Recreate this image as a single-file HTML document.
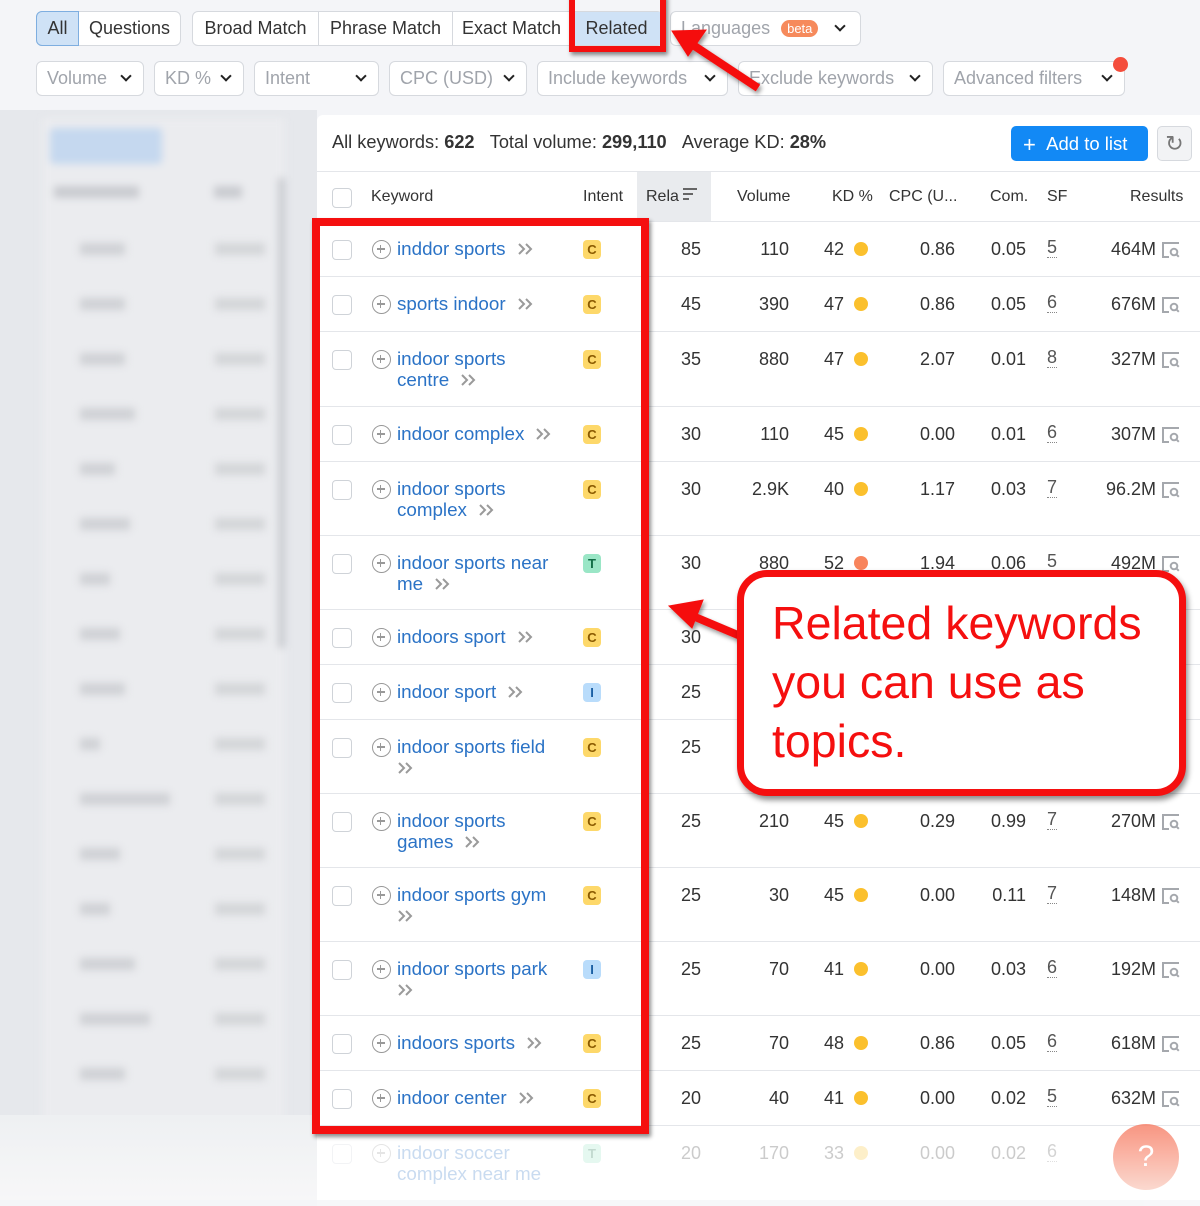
<!DOCTYPE html>
<html><head><meta charset="utf-8"><style>
*{box-sizing:border-box;margin:0;padding:0}
body{width:1200px;height:1200px;overflow:hidden;background:#f4f5f8;font-family:"Liberation Sans",sans-serif;color:#333;font-size:18px;position:relative}
.a{position:absolute;white-space:nowrap}
.btn{position:absolute;top:11px;height:35px;border:1px solid #d6d9de;background:#fff;line-height:33px;font-size:18px;color:#333;display:flex}
.btn span{display:inline-block;text-align:center;border-right:1px solid #d6d9de;height:33px}
.btn span:last-child{border-right:none}
.f{position:absolute;top:61px;height:35px;border:1px solid #d6d9de;border-radius:6px;background:#fff;line-height:33px;color:#a0a4ab;padding-left:10px;font-size:18px}
.chev{display:inline-block;width:8px;height:8px;border-right:2.2px solid #222;border-bottom:2.2px solid #222;transform:rotate(45deg);position:absolute;right:13px;top:10px}
.r{position:absolute;left:317px;width:883px;border-bottom:1px solid #e4e6ea;background:#fff}
.r>*{position:absolute;top:16px;line-height:22px;white-space:nowrap}
.cb{left:15px;top:18px!important;width:20px;height:20px;border:1.5px solid #cfd3d8;border-radius:4px;background:#fff}
.pl{left:55px;top:18px!important;width:19px;height:19px;border:1.8px solid #999;border-radius:50%}
.pl:before{content:"";position:absolute;left:3.5px;top:6.8px;width:8px;height:1.8px;background:#999}
.pl:after{content:"";position:absolute;left:6.6px;top:3.7px;width:1.8px;height:8px;background:#999}
.kw{left:80px;color:#2b73c6;font-size:18.8px;line-height:21px!important}
.kw svg{margin-left:11px;vertical-align:-1px}
.in{left:266px;top:18px!important;width:18px;height:19px;border-radius:4px;font-size:13px;font-weight:bold;text-align:center;line-height:19px!important}
.C{background:#fdd86a;color:#8a5a00}.T{background:#9ae6c6;color:#106c45}.I{background:#b9dcfb;color:#1b5fa3}
.n{text-align:right;font-size:18px}
.rl{right:499px}.vo{right:411px}.kd{right:356px}.dot{left:537px;top:20px!important;width:14px;height:14px;border-radius:50%;background:#fbc02d}
.cpc{right:245px}.com{right:174px}.sf{left:730px;border-bottom:1.5px dotted #888;line-height:19px!important;color:#555;font-size:18px}.res{right:44px}
.ic{left:844px;top:19px!important;width:20px;height:18px}
.blur{filter:blur(4px)}
</style></head><body>
<svg width="0" height="0" style="position:absolute"><defs>
<symbol id="ch" viewBox="0 0 18 14"><path d="M2 2l5 5-5 5M9 2l5 5-5 5" fill="none" stroke="#9a9a9a" stroke-width="2"/></symbol>
<symbol id="mg" viewBox="0 0 20 18"><path d="M18 2H2v14h6" fill="none" stroke="#a5a8ad" stroke-width="2"/><circle cx="13" cy="11" r="3.3" fill="none" stroke="#a5a8ad" stroke-width="2"/><path d="M15.3 13.3l2.5 2.5" stroke="#a5a8ad" stroke-width="2"/></symbol>
</defs></svg>
<!-- top buttons -->
<div class="btn" style="left:36px;border-radius:6px"><span style="width:43px;background:#cfe2f6;border:1px solid #7eaee0;margin:-1px 0 0 -1px;height:35px;border-radius:6px 0 0 6px">All</span><span style="width:101px">Questions</span></div>
<div class="btn" style="left:192px;border-radius:6px"><span style="width:126px">Broad Match</span><span style="width:134px">Phrase Match</span><span style="width:118px">Exact Match</span><span style="width:91px;background:#cfe2f6">Related</span></div>
<div class="btn" style="left:670px;width:191px;border-radius:6px;color:#a0a4ab;padding-left:10px;display:block">Languages <span style="display:inline-block;background:#f68a5c;color:#fff;font-size:13px;line-height:17px;height:17px;border-radius:9px;padding:0 6px;border:none;margin-left:6px;vertical-align:1px">beta</span><div class="chev" style="right:16px"></div></div>
<div class="f" style="left:36px;width:108px">Volume<div class="chev"></div></div>
<div class="f" style="left:154px;width:90px">KD %<div class="chev"></div></div>
<div class="f" style="left:254px;width:125px">Intent<div class="chev"></div></div>
<div class="f" style="left:389px;width:138px">CPC (USD)<div class="chev"></div></div>
<div class="f" style="left:537px;width:191px">Include keywords<div class="chev"></div></div>
<div class="f" style="left:738px;width:195px">Exclude keywords<div class="chev"></div></div>
<div class="f" style="left:943px;width:182px">Advanced filters<div class="chev"></div></div>
<div class="a" style="left:1113px;top:57px;width:15px;height:15px;border-radius:50%;background:#f44d3c"></div>
<!-- left sidebar blurred -->
<div class="a" style="left:0;top:110px;width:317px;height:1090px;background:#e6e8ec"></div>
<div class="a blur" style="left:42px;top:118px;width:243px;height:1010px;background:#ebecef">
 <div class="a" style="left:8px;top:10px;width:112px;height:36px;background:#c5d8ef;border-radius:4px"></div>
 <div class="a" style="left:12px;top:68px;width:85px;height:12px;background:#c9cbd0"></div>
 <div class="a" style="left:172px;top:68px;width:28px;height:12px;background:#c9cbd0"></div>
 <div class="a" style="left:236px;top:60px;width:7px;height:470px;background:#c9cbd0"></div>
</div>
<div class="a blur" style="left:55px;top:240px;width:220px;height:850px">
 <div class="a" style="left:25px;top:3px;width:45px;height:12px;background:#cfd1d5"></div><div class="a" style="left:160px;top:3px;width:50px;height:12px;background:#d3d5d8"></div>
 <div class="a" style="left:25px;top:58px;width:45px;height:12px;background:#cfd1d5"></div><div class="a" style="left:160px;top:58px;width:50px;height:12px;background:#d3d5d8"></div>
 <div class="a" style="left:25px;top:113px;width:45px;height:12px;background:#cfd1d5"></div><div class="a" style="left:160px;top:113px;width:50px;height:12px;background:#d3d5d8"></div>
 <div class="a" style="left:25px;top:168px;width:55px;height:12px;background:#cfd1d5"></div><div class="a" style="left:160px;top:168px;width:50px;height:12px;background:#d3d5d8"></div>
 <div class="a" style="left:25px;top:223px;width:35px;height:12px;background:#cfd1d5"></div><div class="a" style="left:160px;top:223px;width:50px;height:12px;background:#d3d5d8"></div>
 <div class="a" style="left:25px;top:278px;width:50px;height:12px;background:#cfd1d5"></div><div class="a" style="left:160px;top:278px;width:50px;height:12px;background:#d3d5d8"></div>
 <div class="a" style="left:25px;top:333px;width:30px;height:12px;background:#cfd1d5"></div><div class="a" style="left:160px;top:333px;width:50px;height:12px;background:#d3d5d8"></div>
 <div class="a" style="left:25px;top:388px;width:40px;height:12px;background:#cfd1d5"></div><div class="a" style="left:160px;top:388px;width:50px;height:12px;background:#d3d5d8"></div>
 <div class="a" style="left:25px;top:443px;width:45px;height:12px;background:#cfd1d5"></div><div class="a" style="left:160px;top:443px;width:50px;height:12px;background:#d3d5d8"></div>
 <div class="a" style="left:25px;top:498px;width:20px;height:12px;background:#cfd1d5"></div><div class="a" style="left:160px;top:498px;width:50px;height:12px;background:#d3d5d8"></div>
 <div class="a" style="left:25px;top:553px;width:90px;height:12px;background:#cfd1d5"></div><div class="a" style="left:160px;top:553px;width:50px;height:12px;background:#d3d5d8"></div>
 <div class="a" style="left:25px;top:608px;width:40px;height:12px;background:#cfd1d5"></div><div class="a" style="left:160px;top:608px;width:50px;height:12px;background:#d3d5d8"></div>
 <div class="a" style="left:25px;top:663px;width:30px;height:12px;background:#cfd1d5"></div><div class="a" style="left:160px;top:663px;width:50px;height:12px;background:#d3d5d8"></div>
 <div class="a" style="left:25px;top:718px;width:55px;height:12px;background:#cfd1d5"></div><div class="a" style="left:160px;top:718px;width:50px;height:12px;background:#d3d5d8"></div>
 <div class="a" style="left:25px;top:773px;width:70px;height:12px;background:#cfd1d5"></div><div class="a" style="left:160px;top:773px;width:50px;height:12px;background:#d3d5d8"></div>
 <div class="a" style="left:25px;top:828px;width:45px;height:12px;background:#cfd1d5"></div><div class="a" style="left:160px;top:828px;width:50px;height:12px;background:#d3d5d8"></div>
</div>
<div class="a" style="left:0;top:1115px;width:317px;height:85px;background:linear-gradient(#eef0f2,#f7f7f8)"></div>
<!-- main panel -->
<div class="a" style="left:317px;top:115px;width:883px;height:1085px;background:#fff;border-radius:6px 0 0 0"></div>
<div class="a" style="left:332px;top:132px;font-size:18.2px">All keywords: <b>622</b>&nbsp;&nbsp;&nbsp;Total volume: <b>299,110</b>&nbsp;&nbsp;&nbsp;Average KD: <b>28%</b></div>
<div class="a" style="left:1011px;top:126px;width:137px;height:35px;background:#1289f5;border-radius:5px;color:#fff;font-size:18.5px;line-height:35px;padding-left:12px"><span style="font-size:22px;vertical-align:-2px">+</span>&nbsp;&nbsp;Add to list</div>
<div class="a" style="left:1157px;top:126px;width:35px;height:35px;border:1px solid #d6d9de;background:#f2f3f5;border-radius:5px;color:#777;font-size:22px;text-align:center;line-height:33px">&#8635;</div>
<!-- header -->
<div class="a" style="left:317px;top:171px;width:883px;height:51px;background:#fff;border-top:1px solid #e4e6ea;border-bottom:1px solid #e4e6ea"></div>
<div class="a" style="left:637px;top:172px;width:74px;height:49px;background:#e9ebee"></div>
<div class="a" style="left:332px;top:188px;width:20px;height:20px;border:1.5px solid #cfd3d8;border-radius:4px;background:#fff"></div>
<div class="a" style="left:371px;top:188px;font-size:16px">Keyword</div>
<div class="a" style="left:583px;top:188px;font-size:16px">Intent</div>
<div class="a" style="left:646px;top:188px;font-size:16px">Rela<span style="display:inline-block;width:14px;vertical-align:1px;margin-left:4px;line-height:0"><i style="display:block;height:2px;width:14px;background:#666;margin-bottom:3px"></i><i style="display:block;height:2px;width:10px;background:#666;margin-bottom:3px"></i><i style="display:block;height:2px;width:6px;background:#666"></i></span></div>
<div class="a" style="left:737px;top:188px;font-size:16px">Volume</div>
<div class="a" style="left:832px;top:188px;font-size:16px">KD %</div>
<div class="a" style="left:889px;top:188px;font-size:16px">CPC (U...</div>
<div class="a" style="left:990px;top:188px;font-size:16px">Com.</div>
<div class="a" style="left:1047px;top:188px;font-size:16px">SF</div>
<div class="a" style="left:1130px;top:188px;font-size:16px">Results</div>
<!-- rows -->
<div class="r" style="top:222px;height:55px"><i class="cb"></i><i class="pl"></i><div class="kw">inddor sports<svg width="18" height="14"><use href="#ch"/></svg></div><div class="in C">C</div><div class="n rl">85</div><div class="n vo">110</div><div class="n kd">42</div><i class="dot"></i><div class="n cpc">0.86</div><div class="n com">0.05</div><div class="sf">5</div><div class="n res">464M</div><svg class="ic"><use href="#mg"/></svg></div>
<div class="r" style="top:277px;height:55px"><i class="cb"></i><i class="pl"></i><div class="kw">sports indoor<svg width="18" height="14"><use href="#ch"/></svg></div><div class="in C">C</div><div class="n rl">45</div><div class="n vo">390</div><div class="n kd">47</div><i class="dot"></i><div class="n cpc">0.86</div><div class="n com">0.05</div><div class="sf">6</div><div class="n res">676M</div><svg class="ic"><use href="#mg"/></svg></div>
<div class="r" style="top:332px;height:75px"><i class="cb"></i><i class="pl"></i><div class="kw">indoor sports<br>centre<svg width="18" height="14"><use href="#ch"/></svg></div><div class="in C">C</div><div class="n rl">35</div><div class="n vo">880</div><div class="n kd">47</div><i class="dot"></i><div class="n cpc">2.07</div><div class="n com">0.01</div><div class="sf">8</div><div class="n res">327M</div><svg class="ic"><use href="#mg"/></svg></div>
<div class="r" style="top:407px;height:55px"><i class="cb"></i><i class="pl"></i><div class="kw">indoor complex<svg width="18" height="14"><use href="#ch"/></svg></div><div class="in C">C</div><div class="n rl">30</div><div class="n vo">110</div><div class="n kd">45</div><i class="dot"></i><div class="n cpc">0.00</div><div class="n com">0.01</div><div class="sf">6</div><div class="n res">307M</div><svg class="ic"><use href="#mg"/></svg></div>
<div class="r" style="top:462px;height:74px"><i class="cb"></i><i class="pl"></i><div class="kw">indoor sports<br>complex<svg width="18" height="14"><use href="#ch"/></svg></div><div class="in C">C</div><div class="n rl">30</div><div class="n vo">2.9K</div><div class="n kd">40</div><i class="dot"></i><div class="n cpc">1.17</div><div class="n com">0.03</div><div class="sf">7</div><div class="n res">96.2M</div><svg class="ic"><use href="#mg"/></svg></div>
<div class="r" style="top:536px;height:74px"><i class="cb"></i><i class="pl"></i><div class="kw">indoor sports near<br>me<svg width="18" height="14"><use href="#ch"/></svg></div><div class="in T">T</div><div class="n rl">30</div><div class="n vo">880</div><div class="n kd">52</div><i class="dot" style="background:#f8845c"></i><div class="n cpc">1.94</div><div class="n com">0.06</div><div class="sf">5</div><div class="n res">492M</div><svg class="ic"><use href="#mg"/></svg></div>
<div class="r" style="top:610px;height:55px"><i class="cb"></i><i class="pl"></i><div class="kw">indoors sport<svg width="18" height="14"><use href="#ch"/></svg></div><div class="in C">C</div><div class="n rl">30</div></div>
<div class="r" style="top:665px;height:55px"><i class="cb"></i><i class="pl"></i><div class="kw">indoor sport<svg width="18" height="14"><use href="#ch"/></svg></div><div class="in I">I</div><div class="n rl">25</div></div>
<div class="r" style="top:720px;height:74px"><i class="cb"></i><i class="pl"></i><div class="kw">indoor sports field<br><svg width="18" height="14" style="margin-left:0"><use href="#ch"/></svg></div><div class="in C">C</div><div class="n rl">25</div></div>
<div class="r" style="top:794px;height:74px"><i class="cb"></i><i class="pl"></i><div class="kw">indoor sports<br>games<svg width="18" height="14"><use href="#ch"/></svg></div><div class="in C">C</div><div class="n rl">25</div><div class="n vo">210</div><div class="n kd">45</div><i class="dot"></i><div class="n cpc">0.29</div><div class="n com">0.99</div><div class="sf">7</div><div class="n res">270M</div><svg class="ic"><use href="#mg"/></svg></div>
<div class="r" style="top:868px;height:74px"><i class="cb"></i><i class="pl"></i><div class="kw">indoor sports gym<br><svg width="18" height="14" style="margin-left:0"><use href="#ch"/></svg></div><div class="in C">C</div><div class="n rl">25</div><div class="n vo">30</div><div class="n kd">45</div><i class="dot"></i><div class="n cpc">0.00</div><div class="n com">0.11</div><div class="sf">7</div><div class="n res">148M</div><svg class="ic"><use href="#mg"/></svg></div>
<div class="r" style="top:942px;height:74px"><i class="cb"></i><i class="pl"></i><div class="kw">indoor sports park<br><svg width="18" height="14" style="margin-left:0"><use href="#ch"/></svg></div><div class="in I">I</div><div class="n rl">25</div><div class="n vo">70</div><div class="n kd">41</div><i class="dot"></i><div class="n cpc">0.00</div><div class="n com">0.03</div><div class="sf">6</div><div class="n res">192M</div><svg class="ic"><use href="#mg"/></svg></div>
<div class="r" style="top:1016px;height:55px"><i class="cb"></i><i class="pl"></i><div class="kw">indoors sports<svg width="18" height="14"><use href="#ch"/></svg></div><div class="in C">C</div><div class="n rl">25</div><div class="n vo">70</div><div class="n kd">48</div><i class="dot"></i><div class="n cpc">0.86</div><div class="n com">0.05</div><div class="sf">6</div><div class="n res">618M</div><svg class="ic"><use href="#mg"/></svg></div>
<div class="r" style="top:1071px;height:55px"><i class="cb"></i><i class="pl"></i><div class="kw">indoor center<svg width="18" height="14"><use href="#ch"/></svg></div><div class="in C">C</div><div class="n rl">20</div><div class="n vo">40</div><div class="n kd">41</div><i class="dot"></i><div class="n cpc">0.00</div><div class="n com">0.02</div><div class="sf">5</div><div class="n res">632M</div><svg class="ic"><use href="#mg"/></svg></div>
<div class="r" style="top:1126px;height:80px;opacity:.25;border:none"><i class="cb"></i><i class="pl"></i><div class="kw">indoor soccer<br>complex near me</div><div class="in T">T</div><div class="n rl">20</div><div class="n vo">170</div><div class="n kd">33</div><i class="dot"></i><div class="n cpc">0.00</div><div class="n com">0.02</div><div class="sf">6</div></div>
<div class="a" style="left:1113px;top:1124px;width:66px;height:66px;border-radius:50%;background:linear-gradient(#f77b62,#fbd0c4);color:#fff;font-size:30px;text-align:center;line-height:66px;opacity:.8">?</div>
<!-- annotations -->
<div class="a" style="left:569px;top:-6px;width:97px;height:58px;border:6px solid #f50f0f;box-shadow:2px 3px 4px rgba(0,0,0,.45)"></div>
<div class="a" style="left:312px;top:218px;width:337px;height:916px;border:8px solid #f50f0f;box-shadow:2px 3px 4px rgba(0,0,0,.45)"></div>
<svg class="a" style="left:0;top:0" width="1200" height="1200" viewBox="0 0 1200 1200">
<defs><filter id="s"><feDropShadow dx="2" dy="3" stdDeviation="2" flood-opacity=".4"/></filter></defs>
<g filter="url(#s)" fill="#f50f0f" stroke="#f50f0f">
<line x1="758" y1="88" x2="690" y2="43" stroke-width="8"/><polygon points="672,31 706,30 688,56"/>
<line x1="745" y1="638" x2="688" y2="614" stroke-width="8"/><polygon points="669,606 703,600 692,628"/>
</g>
</svg>
<div class="a" style="left:737px;top:570px;width:449px;height:226px;border:7px solid #f50f0f;border-radius:30px;background:#fff;box-shadow:2px 4px 6px rgba(0,0,0,.45)"></div>
<div class="a" style="left:772px;top:594px;font-size:46.5px;line-height:59px;color:#f50f0f">Related keywords<br>you can use as<br>topics.</div>
</body></html>
